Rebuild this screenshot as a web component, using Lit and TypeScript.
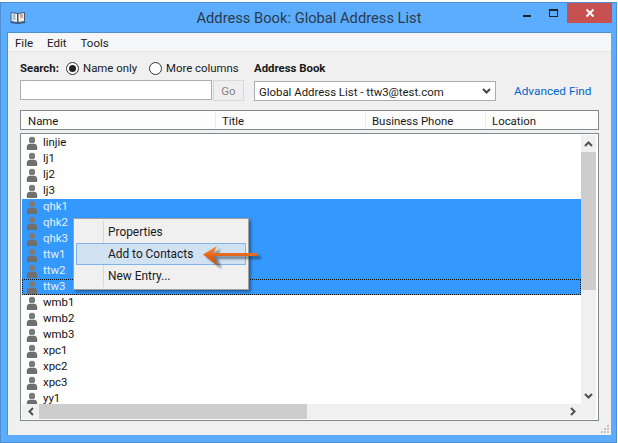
import { LitElement, html, css, svg } from "lit";
import { customElement } from "lit/decorators.js";

const SELECTED = new Set(["qhk1", "qhk2", "qhk3", "ttw1", "ttw2", "ttw3"]);
const NAMES = ["linjie", "lj1", "lj2", "lj3", "qhk1", "qhk2", "qhk3", "ttw1", "ttw2", "ttw3", "wmb1", "wmb2", "wmb3", "xpc1", "xpc2", "xpc3", "yy1"];

const person = svg`<svg class="person" width="14" height="16" viewBox="0 0 14 16">
  <circle cx="7" cy="5" r="3.2" fill="#7b7b7b"/>
  <path d="M5.2 8.6 C3.2 9 2 10 1.9 11.5 C1.6 12.4 1.7 14.6 2.4 15 L11.6 15 C12.3 14.6 12.4 12.4 12.1 11.5 C12 10 10.8 9 8.8 8.6 C8 9.2 6 9.2 5.2 8.6Z" fill="#6f6f6f"/>
</svg>`;

@customElement("app-root")
export class AppRoot extends LitElement {
  static styles = css`
    :host { display: block; width: 618px; height: 443px; background: #fff; overflow: hidden; position: relative;
      font-family: Roboto, "Open Sans", sans-serif; font-size: 11.4px; color: #1a1a1a; }
    .frame { box-sizing: border-box; width: 617px; height: 441px; margin-top: 2px; background: #5cadff;
      border: 1px solid #4d8fd0; display: flex; flex-direction: column; padding: 0 5px 7px 6px; }
    .titlebar { height: 29px; flex: none; display: flex; align-items: flex-start; position: relative; }
    .book { margin: 8px 0 0 3px; }
    .title { position: absolute; left: 0; right: 0; top: 4px; text-align: center; font-size: 14.7px; line-height: 22px; color: #2b3b4c; }
    .controls { margin-left: auto; margin-right: -1px; display: flex; align-items: flex-start; }
    .min { width: 8px; height: 2px; background: #222; margin: 12px 18px 0 0; }
    .max { box-sizing: border-box; width: 9px; height: 8px; border: 1px solid #222; border-top-width: 2px; margin: 6px 9px 0 0; }
    .close { width: 45px; height: 20px; background: #c75050; display: flex; align-items: center; justify-content: center; }
    .client { flex: 1; background: #f0f0f0; border: 1px solid #4d8fd0; border-width: 1px 0 0 1px; display: flex; flex-direction: column; position: relative; min-height: 0; }
    .menubar { height: 18px; flex: none; background: #f5f6f7; border-bottom: 1px solid #e8e8ea; display: flex; gap: 14px; padding-left: 7px; line-height: 20px; font-size: 11.5px; }
    .body { flex: 1; display: flex; flex-direction: column; padding: 0 12px 14px 12px; min-height: 0; }
    .row1 { box-sizing: border-box; display: flex; align-items: center; height: 28px; padding-top: 4px; flex: none; }
    .row1 b { font-weight: 700; }
    .radio { display: flex; align-items: center; gap: 4px; }
    .s { width: 46px; }
    .r1 { width: 83px; }
    .r2 { width: 105px; }
    .dot { box-sizing: border-box; width: 13px; height: 13px; border: 1px solid #333; border-radius: 50%; background: #fff; display: flex; align-items: center; justify-content: center; }
    .dot i { width: 7px; height: 7px; border-radius: 50%; background: #222; }
    .row2 { display: flex; height: 22px; align-items: flex-start; flex: none; }
    .input { box-sizing: border-box; width: 192px; height: 20px; background: #fff; border: 1px solid #abadb3; }
    .go { box-sizing: border-box; width: 31px; height: 21px; margin-left: 1px; background: #efefef; border: 1px solid #d9d9d9; color: #838383; text-align: center; line-height: 21px; }
    .select { box-sizing: border-box; width: 242px; height: 20px; margin: 1px 0 0 10px; background: #fff; border: 1px solid #abadb3; display: flex; align-items: center; padding: 0 4px 0 4px; justify-content: space-between; line-height: 20px; }
    .select span { margin-top: 1px; }
    .link { margin: 1px 0 0 18px; color: #0066cc; line-height: 21px; font-size: 11.8px; }
    .header { box-sizing: border-box; height: 20px; margin-top: 8px; flex: none; background: #fdfdfd; border: 1px solid #828790; display: flex; line-height: 21px; }
    .col { box-sizing: border-box; padding-left: 6px; border-right: 1px solid #e3ecf5; }
    .col:first-child { padding-left: 7px; width: 195px; }
    .col:nth-child(2) { width: 150px; }
    .col:nth-child(3) { width: 120px; }
    .col:last-child { border-right: none; flex: 1; }
    .list { box-sizing: border-box; flex: 1; margin-top: 3px; background: #fff; border: 1px solid #828790; display: grid; grid-template-columns: 1fr 15px; grid-template-rows: 1fr 15px; min-height: 0; padding: 1px 2px 1px 1px; }
    .rows { overflow: hidden; min-height: 0; }
    .item { box-sizing: border-box; height: 16px; display: flex; align-items: center; gap: 4px; padding-left: 3px; line-height: 15px; color: #111; }
    .item span { margin-top: -1px; }
    .item.sel { background: #3399ff; color: #e4f1ff; }
    .item.focus { outline: 1px dotted #111; outline-offset: -1px; }
    .person { flex: none; }
    .vbar { background: #f0f0f0; display: flex; flex-direction: column; grid-row: 1; grid-column: 2; min-height: 0; }
    .hbar { background: #f0f0f0; display: flex; grid-row: 2; grid-column: 1; }
    .corner { background: #f0f0f0; }
    .btn { flex: none; display: flex; align-items: center; justify-content: center; }
    .vbar .btn { height: 17px; }
    .hbar .btn { width: 17px; }
    .vtrack { flex: 1; min-height: 0; }
    .vthumb { height: 138px; background: #cdcdcd; }
    .htrack { flex: 1; }
    .hthumb { width: 268px; height: 100%; background: #cdcdcd; }
    .grip { position: absolute; right: 1px; bottom: 1px; }
    .menu { position: absolute; left: 65px; top: 185px; width: 176px; height: 72px; box-sizing: border-box; background: #f0f0f0; border: 1px solid #a0a0a0; box-shadow: 2px 2px 3px rgba(0,0,0,.4); padding: 2px; display: flex; flex-direction: column; font-size: 11.9px; }
    .menu::before { content: ""; position: absolute; left: 29px; top: 2px; bottom: 2px; width: 1px; background: #d7d7d7; }
    .mi { box-sizing: border-box; height: 22px; padding-left: 31px; line-height: 21px; border: 1px solid transparent; position: relative; }
    .mi.hot { background: #d1e2f2; border-color: #7eb4ea; }
    .arrow { position: absolute; left: 193px; top: 209px; }
  `;

  render() {
    return html`<div class="frame">
      <div class="titlebar">
        <svg class="book" width="16" height="13" viewBox="0 0 16 13">
          <path d="M1 1.5 L7.5 2.5 L7.5 11.5 L1 10.5Z" fill="#f7f7f0" stroke="#3c5a78"/>
          <path d="M14.5 1.5 L8 2.5 L8 11.5 L14.5 10.5Z" fill="#f1efe2" stroke="#3c5a78"/>
          <path d="M2.5 4h3M2.5 6h3M2.5 8h3" stroke="#6b86a0"/>
          <path d="M10 4h3M10 6h3" stroke="#b9644e"/>
          <path d="M0.5 11.5 L7.5 12.5 L15.5 11.5" fill="none" stroke="#2f4b66"/>
        </svg>
        <div class="title">Address Book: Global Address List</div>
        <div class="controls">
          <div class="min"></div><div class="max"></div>
          <div class="close"><svg width="10" height="10" viewBox="0 0 10 10"><path d="M1.5 1.5 L8.5 8.5 M8.5 1.5 L1.5 8.5" stroke="#fff" stroke-width="2"/></svg></div>
        </div>
      </div>
      <div class="client">
        <div class="menubar"><span>File</span><span>Edit</span><span>Tools</span></div>
        <div class="body">
          <div class="row1">
            <b class="s">Search:</b>
            <span class="radio r1"><span class="dot"><i></i></span>Name only</span>
            <span class="radio r2"><span class="dot"></span>More columns</span>
            <b>Address Book</b>
          </div>
          <div class="row2">
            <div class="input"></div>
            <div class="go">Go</div>
            <div class="select"><span>Global Address List - ttw3@test.com</span>
              <svg width="9" height="6" viewBox="0 0 9 6"><path d="M1 1 L4.5 4.5 L8 1" fill="none" stroke="#444" stroke-width="2"/></svg></div>
            <div class="link">Advanced Find</div>
          </div>
          <div class="header">
            <div class="col">Name</div>
            <div class="col">Title</div>
            <div class="col">Business Phone</div>
            <div class="col">Location</div>
          </div>
          <div class="list">
            <div class="rows">
              ${NAMES.map((n) => html`<div class="item ${SELECTED.has(n) ? "sel" : ""} ${n === "ttw3" ? "focus" : ""}">${person}<span>${n}</span></div>`)}
            </div>
            <div class="vbar">
              <div class="btn"><svg width="9" height="6" viewBox="0 0 9 6"><path d="M1 5 L4.5 1.5 L8 5" fill="none" stroke="#505050" stroke-width="2"/></svg></div>
              <div class="vtrack"><div class="vthumb"></div></div>
              <div class="btn"><svg width="9" height="6" viewBox="0 0 9 6"><path d="M1 1 L4.5 4.5 L8 1" fill="none" stroke="#505050" stroke-width="2"/></svg></div>
            </div>
            <div class="hbar">
              <div class="btn"><svg width="6" height="9" viewBox="0 0 6 9"><path d="M5 1 L1.5 4.5 L5 8" fill="none" stroke="#505050" stroke-width="2"/></svg></div>
              <div class="htrack"><div class="hthumb"></div></div>
              <div class="btn"><svg width="6" height="9" viewBox="0 0 6 9"><path d="M1 1 L4.5 4.5 L1 8" fill="none" stroke="#505050" stroke-width="2"/></svg></div>
            </div>
            <div class="corner"></div>
          </div>
        </div>
        <svg class="grip" width="9" height="9" viewBox="0 0 9 9" fill="#c4c4c4">
          <rect x="6" y="0" width="2" height="2"/><rect x="3" y="3" width="2" height="2"/><rect x="6" y="3" width="2" height="2"/>
          <rect x="0" y="6" width="2" height="2"/><rect x="3" y="6" width="2" height="2"/><rect x="6" y="6" width="2" height="2"/>
        </svg>
        <div class="menu">
          <div class="mi">Properties</div>
          <div class="mi hot">Add to Contacts</div>
          <div class="mi">New Entry...</div>
        </div>
        <svg class="arrow" width="70" height="32" viewBox="0 0 70 32">
          <defs>
            <linearGradient id="g" x1="0" x2="0" y1="0" y2="1"><stop offset="0" stop-color="#f5903f"/><stop offset=".55" stop-color="#e25f14"/><stop offset="1" stop-color="#c8480c"/></linearGradient>
            <filter id="b" x="-10%" y="-30%" width="120%" height="160%"><feGaussianBlur stdDeviation="1.2"/></filter>
          </defs>
          <path d="M3 14 L18 6 L14 13 L58 13 L58 16 L15 16 L19 26Z" fill="#1f2c3a" opacity=".55" filter="url(#b)" transform="translate(2 1)"/>
          <path d="M2 12.5 L16 4 L12.5 11 L56 11 L56 14 L12.5 14 L17 24Z" fill="url(#g)"/>
        </svg>
      </div>
    </div>`;
  }
}
